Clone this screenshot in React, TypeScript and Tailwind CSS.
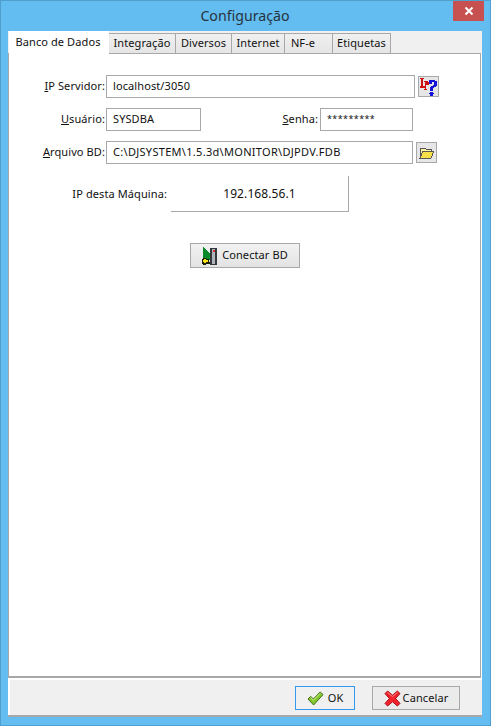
import type React from "react"

const font = { fontFamily: '"Noto Sans", Tahoma, sans-serif' }

const tabs = [
  { label: "Integração", width: "w-[68px]", extra: "" },
  { label: "Diversos", width: "w-[57px]", extra: "" },
  { label: "Internet", width: "w-[54px]", extra: "" },
  { label: "NF-e", width: "w-[49px]", extra: "pr-[11px]" },
  { label: "Etiquetas", width: "w-[59px]", extra: "" },
]

const Field: React.FC<{ value: string; className: string }> = ({ value, className }) => (
  <div className={`h-[23px] border border-[#a8a8a8] bg-white pl-[6px] leading-[19px] text-[#111] whitespace-nowrap ${className}`}>
    {value}
  </div>
)

const LpIcon = () => (
  <svg width="20" height="20" viewBox="0 0 20 20" shapeRendering="crispEdges">
    <path d="M1 1h4v1H4v7h2v2H1V9h1V2H1z" fill="#d01010" />
    <path d="M5 4h4v1h1v3H7v4h1v1H5v-1h1V5H5z" fill="#d01010" />
    <path d="M11 3h6v1h2v5h-1v1h-2v1h-1v3h-3v-4h1V9h2V8h1V5h-2v2h-3V4h0z" fill="#1414d8" />
    <path d="M12 15h3v1h1v1h-1v2h-3v-2h-1v-1h1z" fill="#1414d8" />
  </svg>
)

const FolderIcon = () => (
  <svg width="16" height="14" viewBox="0 0 16 14" shapeRendering="crispEdges">
    <path d="M1 2h5l1 1h5v2H4L1 11z" fill="#fff2a0" stroke="#555" strokeWidth="1" />
    <path d="M4 5h11l-3 7H1z" fill="#f6e04a" stroke="#555" strokeWidth="1" />
  </svg>
)

const ConnectIcon = () => (
  <svg width="15" height="18" viewBox="0 0 15 18" shapeRendering="crispEdges">
    <path d="M1 0h1v1h1v1h1v1h1v1h1v1h1v1h1v7H1z" fill="#0b8a2a" />
    <path d="M8 1h7v17H8z" fill="#34383c" />
    <path d="M10 2h3v15h-3z" fill="#aeb4ba" />
    <path d="M11 3h2v2h-2z" fill="#e03030" />
    <path d="M1 11h3v1h3v3h1v2H4v1H1v-1H0v-5h1z" fill="#1c1c00" />
    <path d="M2 12h2v1h2v2H4v1H2v-1H1v-2h1z" fill="#f4e21c" />
  </svg>
)

const CheckIcon = () => (
  <svg width="17" height="15" viewBox="0 0 17 15">
    <path d="M1 8 3.6 5.4 6.4 8 13.2 1 16 3.6 6.6 14z" fill="#84c62e" stroke="#3f6e12" strokeWidth="1" strokeLinejoin="round" />
    <path d="M3.6 6.6 6.4 9.2 13.2 2.4" fill="none" stroke="#c8ee84" strokeWidth="1" />
  </svg>
)

const CrossIcon = () => (
  <svg width="17" height="17" viewBox="0 0 17 17">
    <path d="M1 3.6 3.6 1 8.5 5.2 13.4 1 16 3.6 11.6 8.5 16 13.4 13.4 16 8.5 11.8 3.6 16 1 13.4 5.4 8.5z" fill="#f4222c" stroke="#a81018" strokeWidth="1" strokeLinejoin="round" />
    <path d="M3.6 2.4 8.5 6.6 13.4 2.4" fill="none" stroke="#ff8a8a" strokeWidth="1" />
  </svg>
)

export default function App() {
  return (
    <div className="h-[726px] w-[491px] overflow-hidden border border-[#4f9fcf] bg-[#64bdf0] pb-[8px] pl-[7px] pr-[8px] text-[11px] text-[#111] tracking-[0.1px]" style={font}>
      <header className="relative flex h-[30px] items-center justify-center text-[14.2px] tracking-normal text-[#26333f]">
        <span className="mb-[1px]">Configuração</span>
        <div className="absolute right-[-2px] top-0 flex h-[20px] w-[31px] items-center justify-center bg-[#c75050]">
          <svg width="10" height="10" viewBox="0 0 10 10">
            <path d="M1.5 1.5l7 7M8.5 1.5l-7 7" stroke="#fff" strokeWidth="2" />
          </svg>
        </div>
      </header>

      <div className="flex h-[686px] flex-col bg-white">
        {/* tabs */}
        <div className="flex h-[22px] bg-[#f0f0f0] pl-px">
          <div className="relative z-10 flex h-[24px] w-[100px] items-start justify-center bg-white pr-[2px] pt-[1px] leading-[19px]">
            Banco de Dados
          </div>
          {tabs.map((tab) => (
            <div
              key={tab.label}
              className={`-ml-[1px] mt-[2px] flex h-[20px] items-center justify-center border border-b-0 border-[#a8a8a8] bg-[linear-gradient(#f0f0f0,#e5e5e5)] first:ml-0 ${tab.width} ${tab.extra}`}
            >
              {tab.label}
            </div>
          ))}
        </div>

        {/* page */}
        <div className="mr-[1px] h-[626px] border border-b-2 border-[#a8a8a8] bg-white pl-[2px] pt-[21px]">
          <div className="flex h-[23px] items-center">
            <span className="w-[95px] pr-px text-right"><u>I</u>P Servidor:</span>
            <Field value="localhost/3050" className="w-[309px]" />
            <button className="ml-[3px] flex h-[21px] w-[21px] items-center justify-center border border-[#a8a8a8] bg-[#e6e6e6]">
              <LpIcon />
            </button>
          </div>

          <div className="mt-[10px] flex h-[23px] items-center">
            <span className="w-[95px] pr-px text-right"><u>U</u>suário:</span>
            <Field value="SYSDBA" className="w-[95px]" />
            <span className="w-[119px] pr-[2px] text-right"><u>S</u>enha:</span>
            <Field value="*********" className="w-[93px] text-[9px] tracking-[0.4px]" />
          </div>

          <div className="mt-[10px] flex h-[23px] items-center">
            <span className="w-[95px] pr-px text-right"><u>A</u>rquivo BD:</span>
            <Field value="C:\DJSYSTEM\1.5.3d\MONITOR\DJPDV.FDB" className="w-[307px] tracking-[0.3px]" />
            <button className="ml-[3px] flex h-[21px] w-[21px] items-center justify-center border border-[#a8a8a8] bg-[#e6e6e6]">
              <FolderIcon />
            </button>
          </div>

          <div className="mt-[12px] flex h-[36px] items-center">
            <span className="w-[157px] pr-px text-right">IP desta Máquina:</span>
            <div className="ml-[3px] flex h-[36px] w-[178px] items-center justify-center border-b border-r border-[#a8a8a8] pt-px text-[12px]">
              192.168.56.1
            </div>
          </div>

          <button className="ml-[179px] mt-[31px] flex h-[25px] w-[110px] items-center justify-center gap-[5px] border border-[#a8a8a8] bg-[linear-gradient(#f2f2f2,#e3e3e3)]">
            <ConnectIcon />
            Conectar BD
          </button>
        </div>

        {/* footer */}
        <div className="flex flex-1 flex-col">
          <div className="ml-[2px] mt-[2px] flex h-[35px] items-start bg-[#f0f0f0] pt-[6px]">
            <button className="ml-[285px] flex h-[24px] w-[60px] items-center justify-center gap-[4px] border border-[#3399ee] bg-[#f0f0f0]">
              <CheckIcon />
              OK
            </button>
            <button className="ml-[17px] flex h-[24px] w-[88px] items-center justify-center gap-[2px] border border-[#a8a8a8] bg-[#ebebeb]">
              <CrossIcon />
              Cancelar
            </button>
          </div>
          <div className="h-[2px] bg-[#a8a8a8]" />
        </div>
      </div>
    </div>
  )
}
